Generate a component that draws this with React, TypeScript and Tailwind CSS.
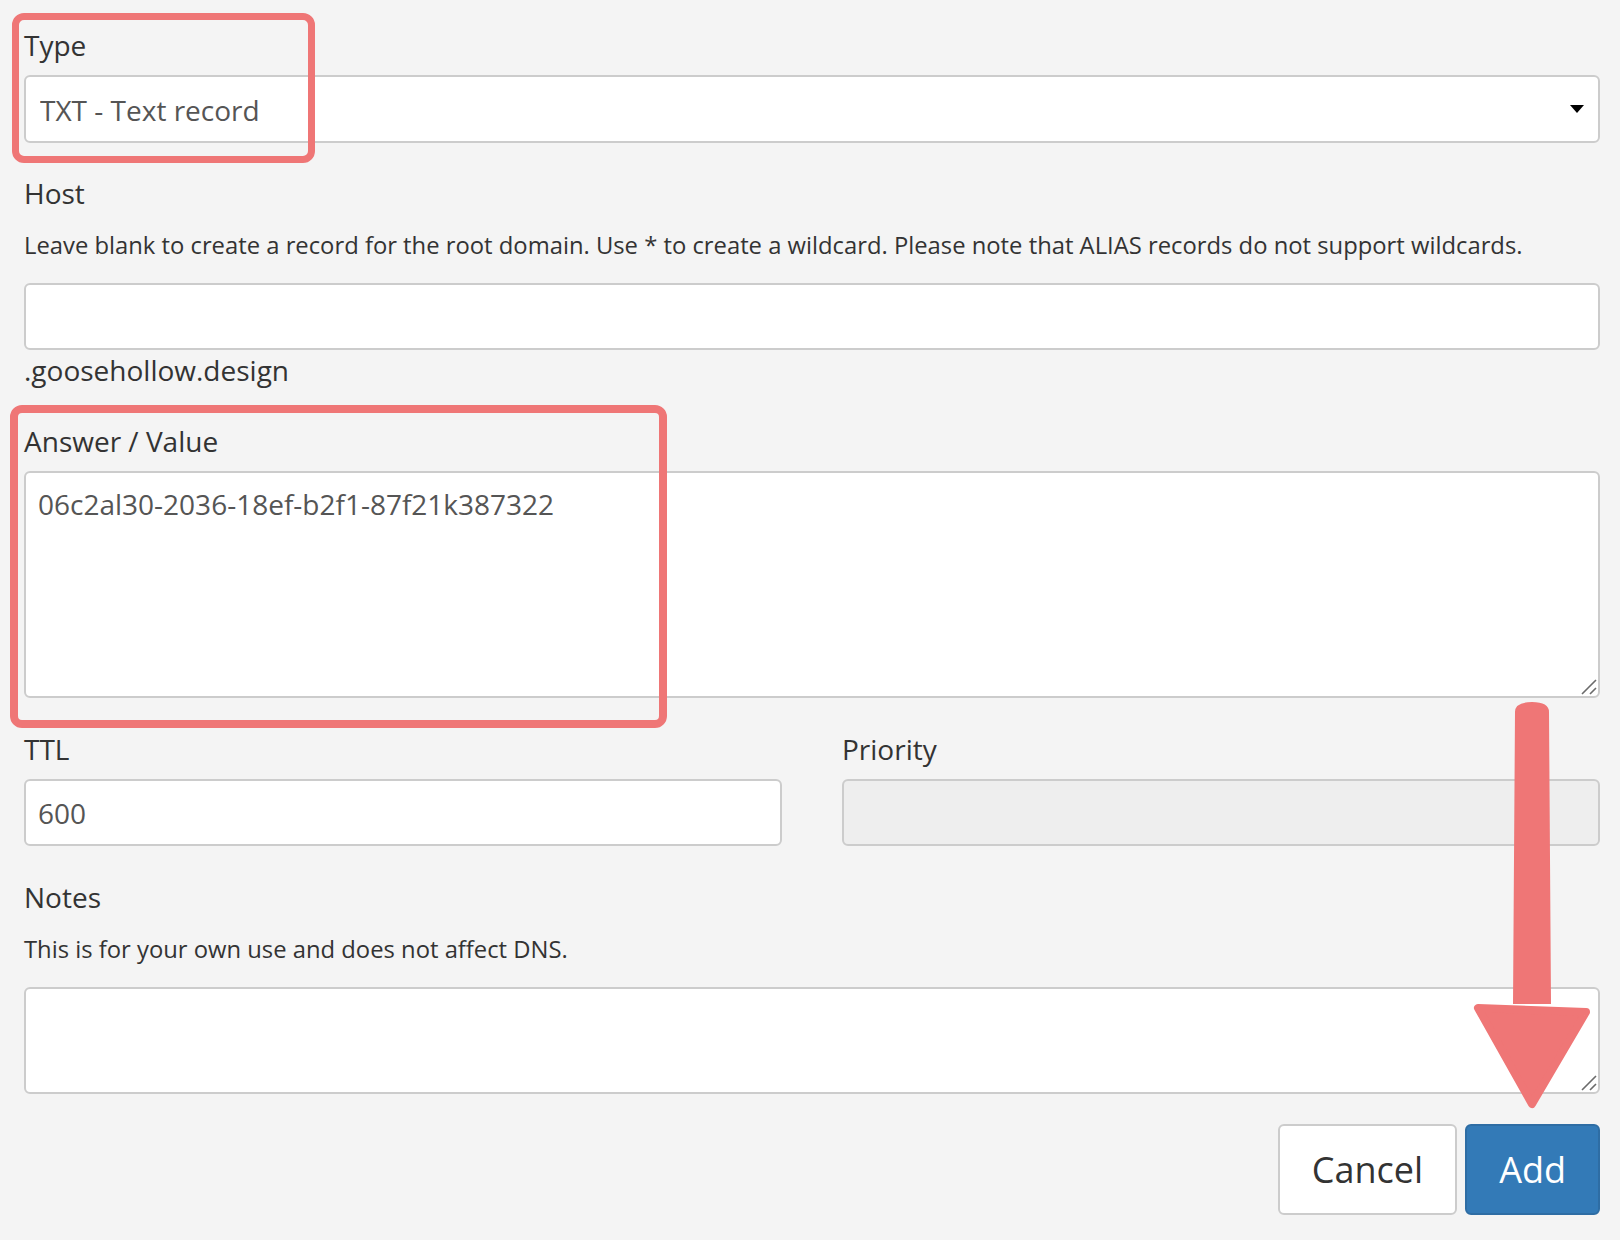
import React from "react";

const RED = "#ef7676";

function Label({ children }: { children: React.ReactNode }) {
  return <label className="block text-[28px] leading-[40px] mb-[10px] text-[#333]">{children}</label>;
}

// margin collapses with the label's, so this is the full gap under the label
function Help({ children }: { children: React.ReactNode }) {
  return <p className="text-[23.8px] leading-[34px] mt-[15px] mb-[21px] text-[#333]">{children}</p>;
}

function Grip() {
  return (
    <svg className="absolute right-[3px] bottom-[3px] pointer-events-none" width="16" height="16" viewBox="0 0 16 16">
      <path d="M1 15 L15 1 M9 15 L15 9" stroke="#6b6b6b" strokeWidth="1.6" />
    </svg>
  );
}

const field =
  "block w-full border-2 border-[#ccc] rounded-[6px] px-[12px] text-[28px] leading-[40px] text-[#555] outline-none";

export default function App() {
  return (
    <div className="relative min-h-screen bg-[#f4f4f4] font-['Open_Sans',sans-serif] pl-[24px] pr-[20px] pt-[25px]">
      {/* Type */}
      <div className="mb-[30px]">
        <Label>Type</Label>
        <div className="relative">
          <select defaultValue="TXT" className={`${field} bg-white h-[68px] appearance-none pl-[14px] pt-[2px]`}>
            <option value="A">A - Address record</option>
            <option value="CNAME">CNAME - Canonical name record</option>
            <option value="TXT">TXT - Text record</option>
          </select>
          <svg className="absolute right-[16px] top-[30px] pointer-events-none" width="14" height="8" viewBox="0 0 14 8">
            <path d="M0 0 H14 L7 8 Z" fill="#000" />
          </svg>
        </div>
      </div>

      {/* Host */}
      <div className="mb-[31px]">
        <Label>Host</Label>
        <Help>
          Leave blank to create a record for the root domain. Use * to create a wildcard. Please note that ALIAS records do
          not support wildcards.
        </Help>
        <input type="text" className={`${field} bg-white h-[67px]`} />
        <div className="text-[28px] leading-[40px] text-[#333]">.goosehollow.design</div>
      </div>

      {/* Answer / Value */}
      <div className="mb-[31px]">
        <Label>Answer / Value</Label>
        <div className="relative">
          <textarea
            defaultValue="06c2al30-2036-18ef-b2f1-87f21k387322"
            className={`${field} bg-white h-[227px] py-[11px] resize-none`}
          />
          <Grip />
        </div>
      </div>

      {/* TTL / Priority */}
      <div className="grid grid-cols-2 gap-x-[60px] mb-[31px]">
        <div>
          <Label>TTL</Label>
          <input type="text" defaultValue="600" className={`${field} bg-white h-[67px]`} />
        </div>
        <div>
          <Label>Priority</Label>
          <input type="text" disabled className={`${field} bg-[#eee] h-[67px]`} />
        </div>
      </div>

      {/* Notes */}
      <div>
        <Label>Notes</Label>
        <Help>This is for your own use and does not affect DNS.</Help>
        <div className="relative">
          <textarea className={`${field} bg-white h-[107px] py-[11px] resize-none`} />
          <Grip />
        </div>
      </div>

      <div className="flex justify-end gap-[8px] mt-[30px]">
        <button className="h-[91px] px-[32px] bg-white border-2 border-[#ccc] rounded-[6px] text-[36px] text-[#333] flex items-center">
          Cancel
        </button>
        <button className="h-[91px] px-[32px] bg-[#337ab7] border-2 border-[#2e6da4] rounded-[6px] text-[36px] text-white flex items-center">
          Add
        </button>
      </div>

      {/* annotation boxes */}
      <div className="absolute left-[12px] top-[13px] w-[303px] h-[150px] border-[7px] rounded-[12px] pointer-events-none" style={{ borderColor: RED }} />
      <div className="absolute left-[10px] top-[405px] w-[657px] h-[323px] border-[8px] rounded-[12px] pointer-events-none" style={{ borderColor: RED }} />

      {/* annotation arrow */}
      <svg
        className="absolute left-[1468px] top-[696px] pointer-events-none"
        width="128"
        height="418"
        viewBox="1468 696 128 418"
      >
        <path d="M1515 712 Q1515 702 1532 702 Q1549 702 1549 712 L1551 1004 L1513 1004 Z" fill={RED} />
        <path
          d="M1478 1008 L1586 1012 L1532 1104 Z"
          fill={RED}
          stroke={RED}
          strokeWidth="8"
          strokeLinejoin="round"
        />
      </svg>
    </div>
  );
}
